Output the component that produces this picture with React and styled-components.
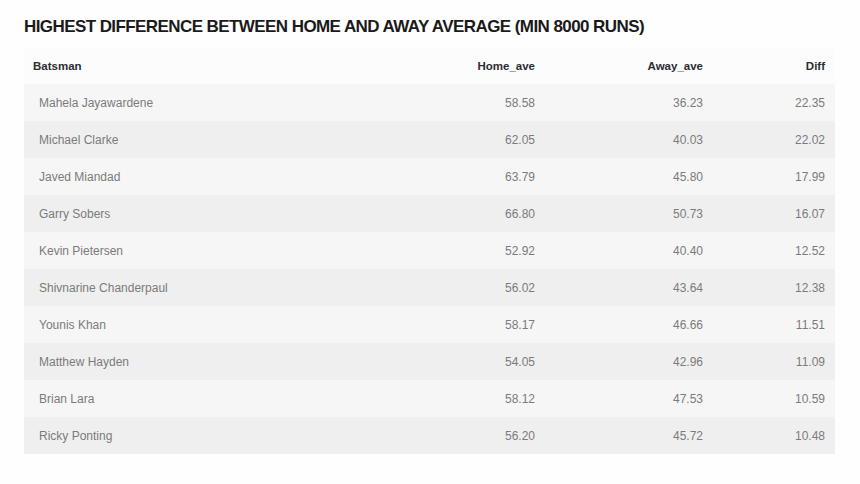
import React from "react";
import styled, { createGlobalStyle } from "styled-components";

const Global = createGlobalStyle`
  html, body { margin: 0; padding: 0; background: #fefefe; }
  body { font-family: "Liberation Sans", Arial, sans-serif; }
`;

const Page = styled.div`
  padding: 16px 25px 0 24px;
  width: 811px;
`;

const Title = styled.h1`
  margin: 0 0 11px 0;
  font-size: 17px;
  line-height: 21px;
  font-weight: 700;
  color: #1a1a1a;
  letter-spacing: -0.58px;
`;

const Table = styled.div`
  display: flex;
  flex-direction: column;
  background: #fcfcfc;
`;

const Row = styled.div`
  display: grid;
  grid-template-columns: 1fr 150px 168px 122px;
  align-items: center;
  height: ${(p) => (p.$header ? 36 : 37)}px;
  padding: 0 10px 0 ${(p) => (p.$header ? 9 : 15)}px;
  background: ${(p) => (p.$header ? "#fcfcfc" : p.$alt ? "#efefef" : "#f6f6f6")};
  font-size: ${(p) => (p.$header ? 11.5 : 12)}px;
  font-weight: ${(p) => (p.$header ? 700 : 400)};
  color: ${(p) => (p.$header ? "#2c2c33" : "#7b7b7b")};
`;

const Cell = styled.div`
  text-align: ${(p) => (p.$num ? "right" : "left")};
`;

const data = [
  ["Mahela Jayawardene", "58.58", "36.23", "22.35"],
  ["Michael Clarke", "62.05", "40.03", "22.02"],
  ["Javed Miandad", "63.79", "45.80", "17.99"],
  ["Garry Sobers", "66.80", "50.73", "16.07"],
  ["Kevin Pietersen", "52.92", "40.40", "12.52"],
  ["Shivnarine Chanderpaul", "56.02", "43.64", "12.38"],
  ["Younis Khan", "58.17", "46.66", "11.51"],
  ["Matthew Hayden", "54.05", "42.96", "11.09"],
  ["Brian Lara", "58.12", "47.53", "10.59"],
  ["Ricky Ponting", "56.20", "45.72", "10.48"],
];

export default function App() {
  return (
    <Page>
      <Global />
      <Title>HIGHEST DIFFERENCE BETWEEN HOME AND AWAY AVERAGE (MIN 8000 RUNS)</Title>
      <Table>
        <Row $header>
          <Cell>Batsman</Cell>
          <Cell $num>Home_ave</Cell>
          <Cell $num>Away_ave</Cell>
          <Cell $num>Diff</Cell>
        </Row>
        {data.map((r, i) => (
          <Row key={r[0]} $alt={i % 2 === 1}>
            <Cell>{r[0]}</Cell>
            <Cell $num>{r[1]}</Cell>
            <Cell $num>{r[2]}</Cell>
            <Cell $num>{r[3]}</Cell>
          </Row>
        ))}
      </Table>
    </Page>
  );
}
